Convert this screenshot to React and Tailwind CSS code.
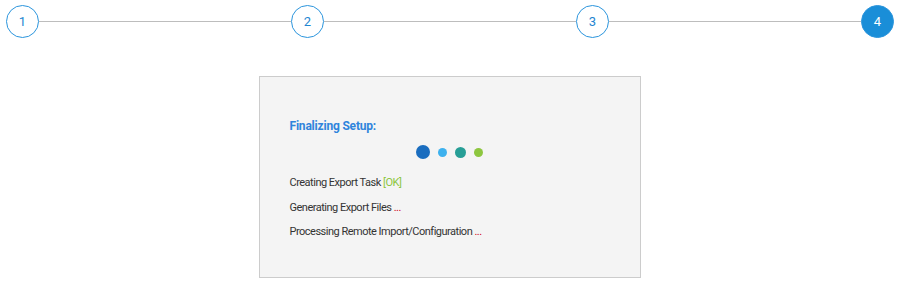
const steps = [1, 2, 3, 4];
const active = 4;

const tasks = [
  { label: 'Creating Export Task', status: 'ok' },
  { label: 'Generating Export Files', status: 'pending' },
  { label: 'Processing Remote Import/Configuration', status: 'pending' }
];

function Step({ n }) {
  const on = n === active;
  return (
    <div
      className={
        'flex h-[33px] w-[33px] shrink-0 items-center justify-center rounded-full border-[1.5px] border-[#2b95dd] text-[13px] ' +
        (on ? 'bg-[#1a8ed8] text-white' : 'bg-white text-[#1f86d1]')
      }
    >
      {n}
    </div>
  );
}

export default function App() {
  return (
    <div className="min-h-[286px] bg-white font-['Roboto',sans-serif]">
      {/* stepper */}
      <div className="flex items-center pl-[6px] pr-[5px] pt-[5px]">
        {steps.map((n, i) => (
          <div key={n} className={i < steps.length - 1 ? 'flex flex-1 items-center' : 'flex items-center'}>
            <Step n={n} />
            {i < steps.length - 1 && <div className="h-px flex-1 bg-[#bdbdbd]" />}
          </div>
        ))}
      </div>

      {/* progress panel */}
      <div className="mx-auto mt-[38px] box-border h-[202px] w-[382px] border border-[#cccccc] bg-[#f4f4f4] px-[30px] pt-[42px]">
        <h3 className="text-[12px] font-bold leading-[14px] tracking-[-0.2px] text-[#2f84dc]">Finalizing Setup:</h3>

        <div className="mt-[12px] flex h-[14px] items-center justify-center gap-2">
          <span className="h-[14px] w-[14px] rounded-full bg-[#1a6dbf]" />
          <span className="h-[9px] w-[9px] rounded-full bg-[#3db1ee]" />
          <span className="h-[11px] w-[11px] rounded-full bg-[#279e96]" />
          <span className="h-[9px] w-[9px] rounded-full bg-[#8dc63f]" />
        </div>

        <ul className="mt-[12px] text-[11px] leading-[24.5px] tracking-[-0.5px] text-[#333333]">
          {tasks.map(t => (
            <li key={t.label}>
              {t.label}{' '}
              {t.status === 'ok' ? (
                <span className="text-[#8cc63f]">[OK]</span>
              ) : (
                <span className="text-[#d0021b]">...</span>
              )}
            </li>
          ))}
        </ul>
      </div>
    </div>
  );
}
